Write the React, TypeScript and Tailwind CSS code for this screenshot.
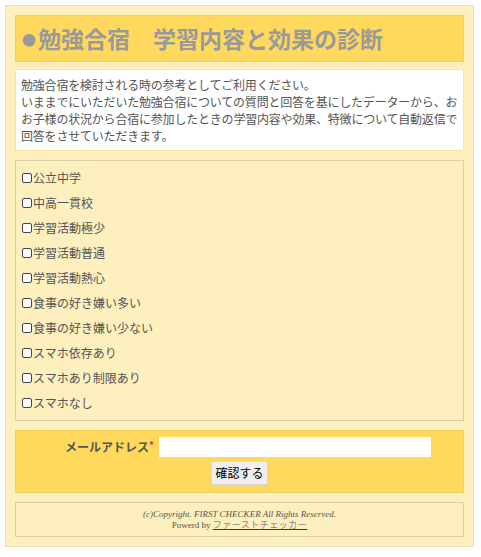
const jp = { fontFamily: '"Noto Sans CJK JP", "Noto Sans", sans-serif' };

const items = [
    "公立中学",
    "中高一貫校",
    "学習活動極少",
    "学習活動普通",
    "学習活動熱心",
    "食事の好き嫌い多い",
    "食事の好き嫌い少ない",
    "スマホ依存あり",
    "スマホあり制限あり",
    "スマホなし",
];

export default function App() {
    return (
        <div className="min-h-[557px] bg-white pt-[5px] pl-[5px]" style={jp}>
            <div className="w-[469px] border border-[#ecdfb3] bg-[#fdefbe] p-[9px]">
                <div className="flex h-[47px] items-center border border-[#f1cf63] bg-[#fed95d] px-[6px]">
                    <h1 className="flex items-center font-bold leading-none text-[#9a9a9a]">
                        <span className="mr-[2px] text-[14px]">●</span>
                        <span className="text-[23px]">勉強合宿　学習内容と効果の診断</span>
                    </h1>
                </div>

                <div className="mt-[7px] border border-[#fde3a0] bg-white px-[5px] py-[6px] text-[12px] leading-[17px] tracking-[-0.2px] whitespace-nowrap text-[#555]">
                    勉強合宿を検討される時の参考としてご利用ください。
                    <br />
                    いままでにいただいた勉強合宿についての質問と回答を基にしたデーターから、お
                    <br />
                    お子様の状況から合宿に参加したときの学習内容や効果、特徴について自動返信で
                    <br />
                    回答をさせていただきます。
                </div>

                <div className="mt-[9px] border border-[#ddd0a6] px-[6px] pt-[4px] pb-[5px]">
                    {items.map((label) => (
                        <label key={label} className="flex h-[25px] items-center text-[12px] text-[#555]">
                            <input
                                type="checkbox"
                                className="m-0 mr-[1px] h-[10px] w-[10px] appearance-none rounded-[2px] border border-[#444] bg-white"
                            />
                            {label}
                        </label>
                    ))}
                </div>

                <div className="mt-[9px] border border-[#f3cf62] bg-[#fed95d] pt-[6px] pb-[7px]">
                    <div className="flex items-center pl-[49px]">
                        <span className="text-[12px] font-bold text-[#555]">メールアドレス</span>
                        <span className="mr-[5px] mt-[-4px] text-[10px] font-bold leading-none text-[#d33]">*</span>
                        <input type="text" className="h-[20px] w-[272px] border-0 bg-white outline-none" />
                    </div>
                    <div className="mt-[4px] flex justify-center">
                        <button className="h-[24px] rounded-[2px] border border-[#d6d6d6] bg-[#efefef] px-[3px] text-[12px] text-black">
                            確認する
                        </button>
                    </div>
                </div>

                <div
                    className="mt-[9px] flex h-[35px] flex-col items-center justify-center border border-[#ddd0a6] text-[9px] leading-[11px] text-[#555] italic"
                    style={{ fontFamily: '"Liberation Serif", "Noto Sans CJK JP", serif' }}
                >
                    <span>(c)Copyright. FIRST CHECKER All Rights Reserved.</span>
                    <span className="not-italic">
                        Powerd by{" "}
                        <a href="#" className="tracking-[0.5px] text-[#888] underline decoration-[#6b1f6b]">
                            ファーストチェッカー
                        </a>
                    </span>
                </div>
            </div>
        </div>
    );
}
